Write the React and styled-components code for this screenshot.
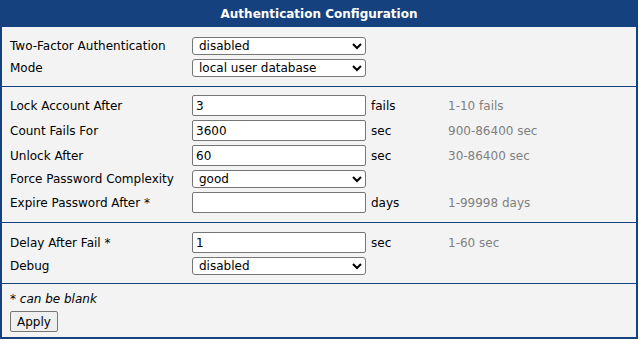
import styled, { createGlobalStyle } from "styled-components"

const GlobalStyle = createGlobalStyle`
    body {
        margin: 0;
        background: #ffffff;
        font-family: "DejaVu Sans", sans-serif;
        font-size: 12px;
        color: #000000;
    }
`

const Frame = styled.div`
    width: 638px;
    box-sizing: border-box;
    border: 2px solid #15427e;
    border-top: none;
    background: #f3f3f3;
`

const Header = styled.div`
    height: 27px;
    margin: 0 -2px;
    background: #15427e;
    color: #ffffff;
    font-weight: bold;
    font-size: 12px;
    display: flex;
    align-items: center;
    justify-content: center;
`

const Section = styled.div`
    padding: ${p => p.pad || "7px 0"};
    border-top: ${p => (p.first ? "none" : "1px solid #15427e")};
`

const Row = styled.div`
    display: grid;
    grid-template-columns: 182px 174px 82px 1fr;
    align-items: center;
    padding: 2px 0 2px 8px;
`

const Label = styled.span`
    white-space: nowrap;
`

const Unit = styled.span`
    padding-left: 5px;
`

const Hint = styled.span`
    color: #808080;
`

const TextInput = styled.input`
    box-sizing: border-box;
    width: 174px;
    height: 21px;
    margin: 0;
    padding: 0 3px;
    border: 1px solid #767676;
    border-radius: 2px;
    background: #ffffff;
    font: inherit;
    color: #000000;
    &:focus {
        outline: none;
    };
`

const Select = styled.select`
    box-sizing: border-box;
    width: 174px;
    height: 18px;
    margin: 0;
    padding: 0 2px;
    border: 1px solid #767676;
    border-radius: 3px;
    background: #ffffff;
    font: inherit;
    color: #000000;
`

const Note = styled.div`
    padding-left: 8px;
    font-style: italic;
    line-height: 16px;
`

const Button = styled.button`
    margin: 4px 0 0 8px;
    height: 21px;
    padding: 0 6px;
    border: 1px solid #767676;
    border-radius: 2px;
    background: #efefef;
    font: inherit;
    color: #000000;
`

const Field = ({ label, value, unit, hint }) => (
  <Row>
    <Label>{label}</Label>
    <TextInput defaultValue={value} />
    <Unit>{unit}</Unit>
    <Hint>{hint}</Hint>
  </Row>
)

const Choice = ({ label, value, options }) => (
  <Row>
    <Label>{label}</Label>
    <Select defaultValue={value}>
      {options.map(o => <option key={o}>{o}</option>)}
    </Select>
  </Row>
)

const App = () => {
  return (
    <>
      <GlobalStyle />
      <Frame>
        <Header>Authentication Configuration</Header>
        <Section first pad="8px 0 7px">
          <Choice label="Two-Factor Authentication" value="disabled" options={["disabled", "enabled"]} />
          <Choice label="Mode" value="local user database" options={["local user database", "RADIUS", "TACACS+"]} />
        </Section>
        <Section pad="6px 0 7px">
          <Field label="Lock Account After" value="3" unit="fails" hint="1-10 fails" />
          <Field label="Count Fails For" value="3600" unit="sec" hint="900-86400 sec" />
          <Field label="Unlock After" value="60" unit="sec" hint="30-86400 sec" />
          <Choice label="Force Password Complexity" value="good" options={["none", "good", "strong"]} />
          <Field label="Expire Password After *" value="" unit="days" hint="1-99998 days" />
        </Section>
        <Section pad="7px 0 6px">
          <Field label="Delay After Fail *" value="1" unit="sec" hint="1-60 sec" />
          <Choice label="Debug" value="disabled" options={["disabled", "enabled"]} />
        </Section>
        <Section pad="7px 0 5px">
          <Note>* can be blank</Note>
          <Button>Apply</Button>
        </Section>
      </Frame>
    </>
  )
}

export default App
